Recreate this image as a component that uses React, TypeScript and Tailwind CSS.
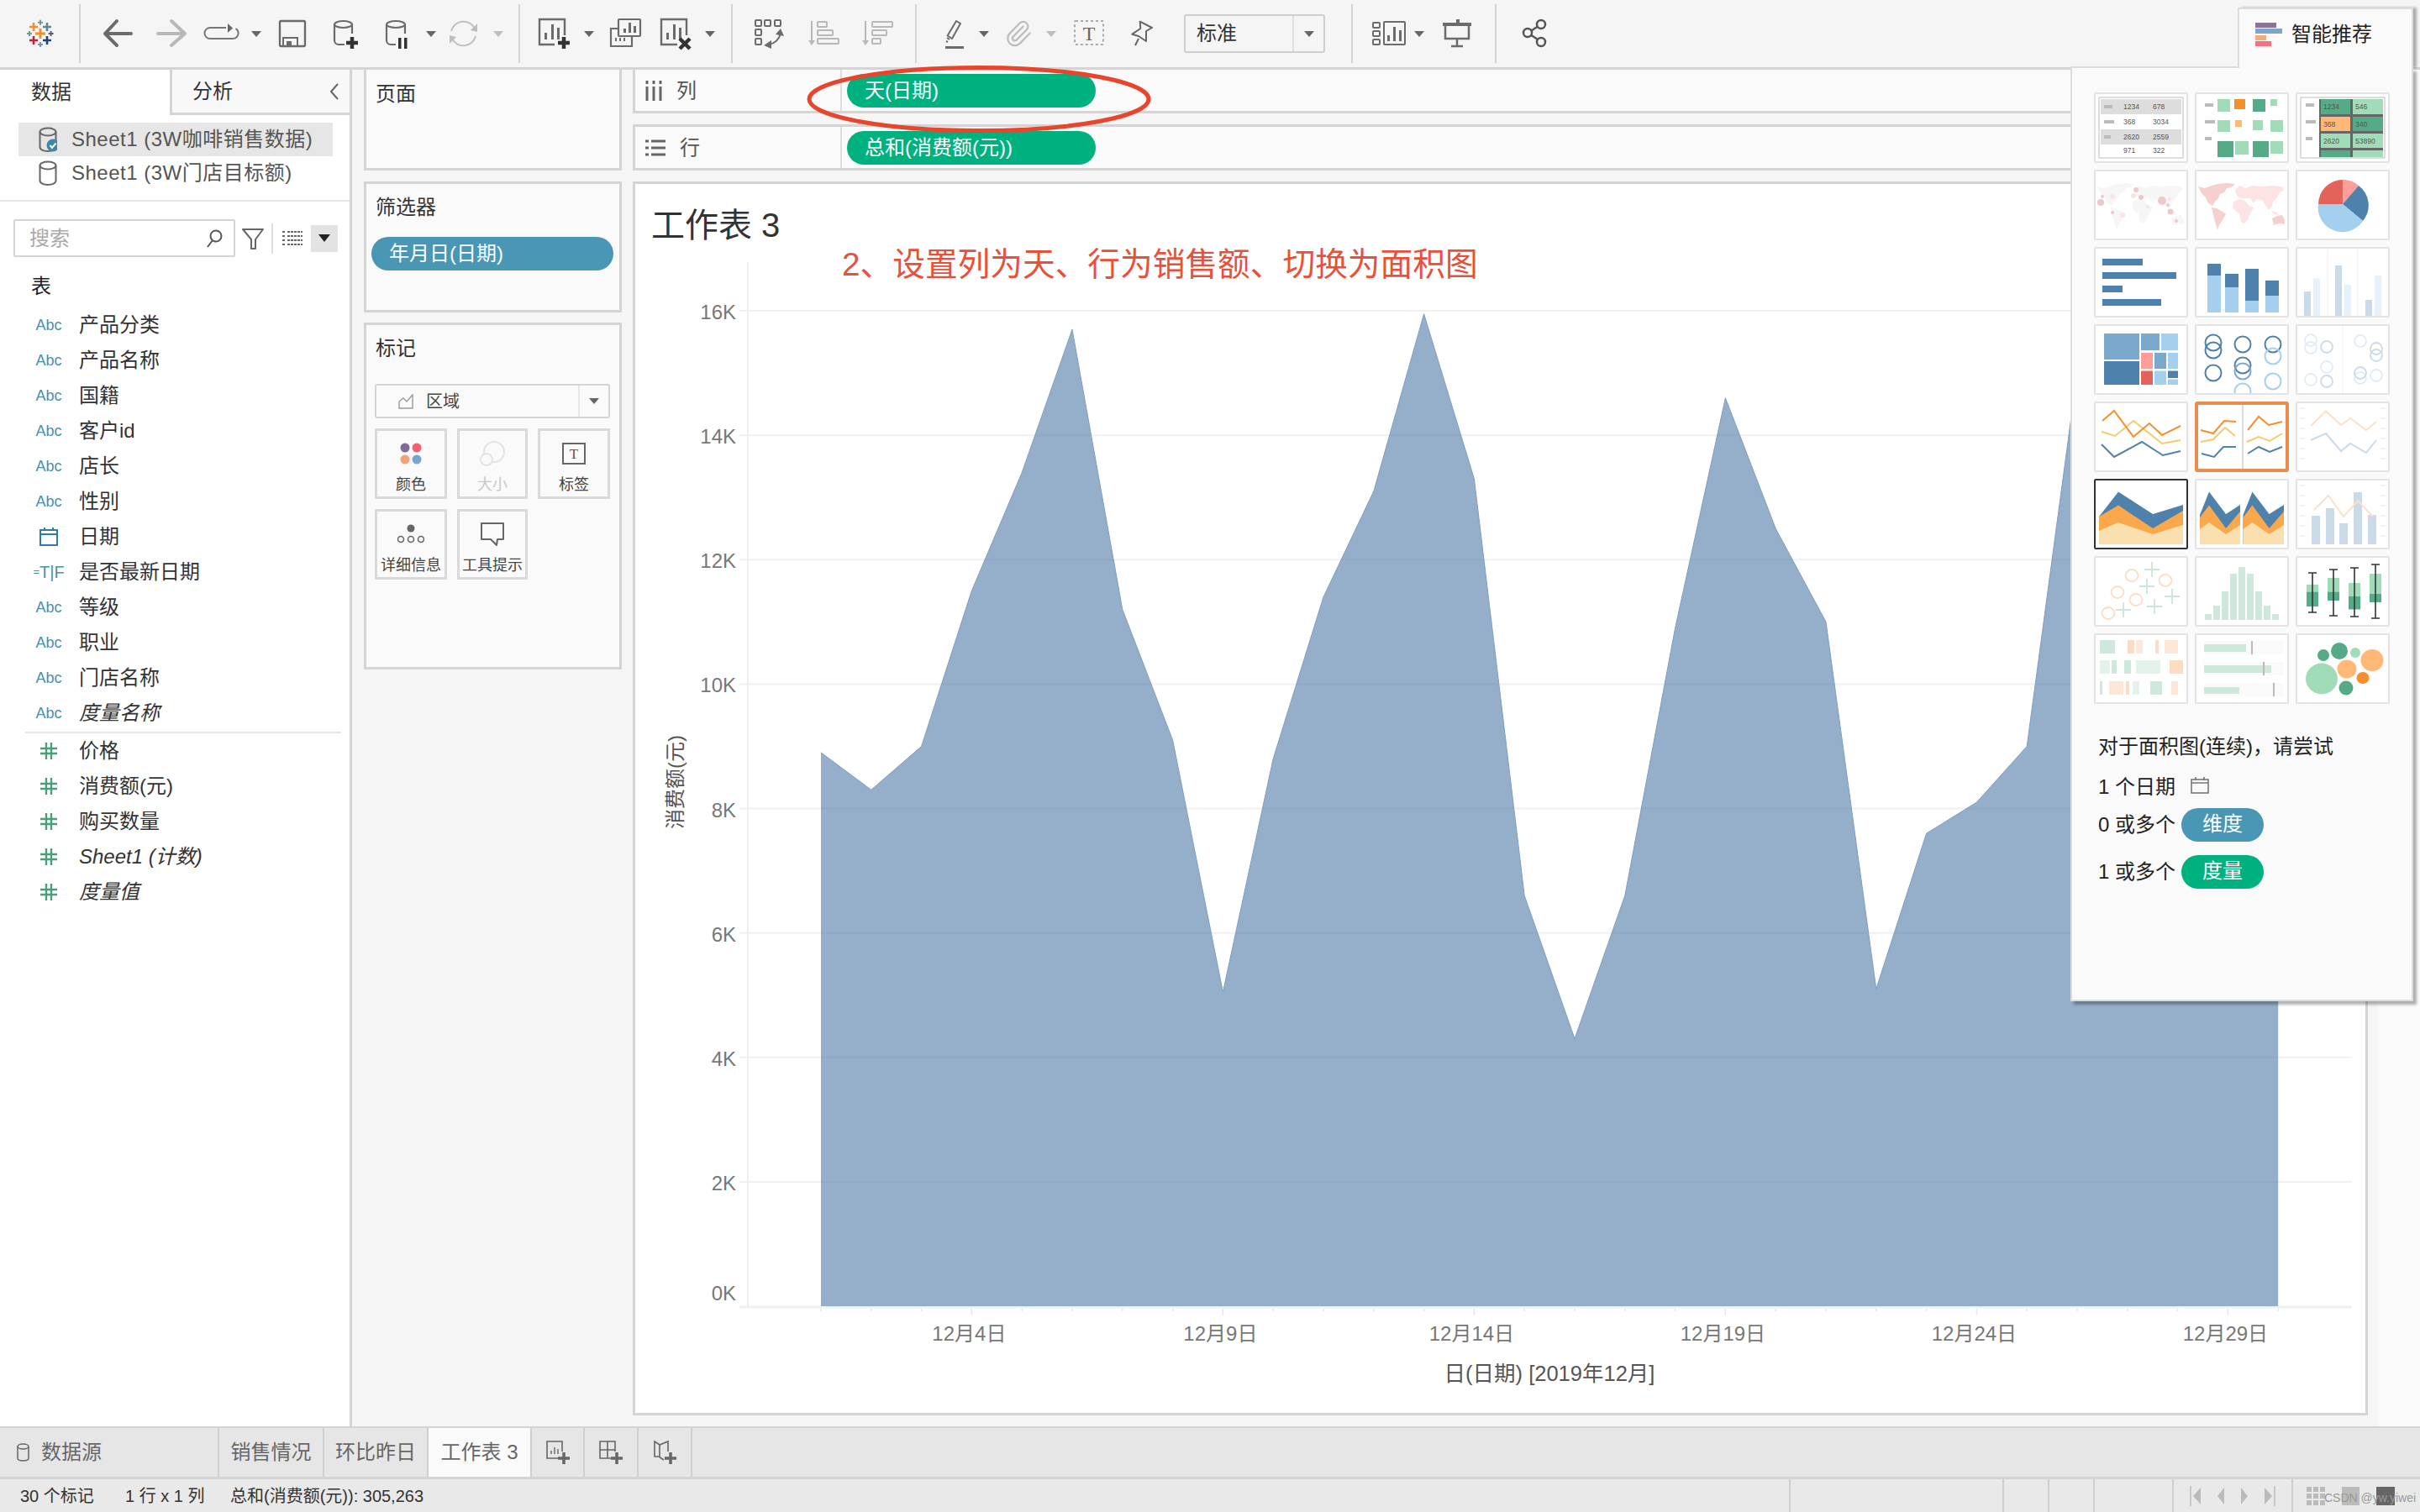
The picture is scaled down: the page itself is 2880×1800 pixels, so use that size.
import React from 'react';
import { Paperclip } from 'lucide-react';

const SALES = [8.9, 8.3, 9.0, 11.5, 13.4, 15.7, 11.2, 9.1, 5.05, 8.8, 11.4, 13.1, 15.95, 13.3, 6.6, 4.3, 6.6, 10.9, 14.6, 12.5, 11.0, 5.1, 7.6, 8.1, 9.0, 15.0, 12.0, 9.0, 7.5, 10.0];
const dayX = (i: number) => 977 + 59.8 * i;
const valY = (k: number) => 1555 - 74.06 * k;

const GRID = '#f0f0f0';
const BLUE = '#4e81ac';
const SKY = '#a5cfee';
const GREEN = '#55ab87';
const MINT = '#a0dcb8';
const ORANGE = '#f58f2c';
const PEACH = '#ffb877';

function Ico({ className = '', children }: { className?: string; children: React.ReactNode }) {
  return (
    <svg viewBox="0 0 44 44" fill="none" className={`w-[44px] h-[44px] shrink-0 ${className}`}>
      {children}
    </svg>
  );
}

function Caret({ className = '', light = false }: { className?: string; light?: boolean }) {
  return (
    <svg viewBox="0 0 12 7" className={`w-[12px] h-[7px] shrink-0 ${className}`}>
      <path d="M0 0H12L6 7Z" fill={light ? '#bdbdbd' : '#666'} />
    </svg>
  );
}

function Sep({ className = '' }: { className?: string }) {
  return <div className={`w-[2px] h-[70px] bg-[#d4d4d4] shrink-0 ${className}`} />;
}

function Plus({ x, y, h, w, c }: { x: number; y: number; h: number; w: number; c: string }) {
  return <path d={`M${x - h} ${y}H${x + h}M${x} ${y - h}V${y + h}`} stroke={c} strokeWidth={w} />;
}

function Toolbar() {
  const dark = '#6b6b6b';
  const lite = '#b8b8b8';
  return (
    <div className="flex items-center h-[80px] bg-[#f5f5f5] pl-[26px] shrink-0">
      <Ico>
        <Plus x={14} y={14} h={5} w={2.6} c="#f28e2b" />
        <Plus x={30} y={14} h={5} w={2.6} c="#5b879b" />
        <Plus x={22} y={8.7} h={3} w={2} c="#7099a6" />
        <Plus x={22} y={22} h={6} w={2.8} c="#f28e2b" />
        <Plus x={9} y={22} h={3} w={2} c="#7099a6" />
        <Plus x={34.6} y={22} h={3} w={2} c="#59598f" />
        <Plus x={14} y={30} h={5} w={2.6} c="#c72037" />
        <Plus x={30} y={30} h={5} w={2.6} c="#1f447a" />
        <Plus x={22} y={35} h={3} w={2} c="#7c95b4" />
      </Ico>
      <Sep className="ml-[24px]" />
      <Ico className="ml-[22px]">
        <path d="M21 7L7 22L21 36M7 22H38" stroke={dark} strokeWidth="4" strokeLinecap="round" strokeLinejoin="round" />
      </Ico>
      <Ico className="ml-[20px]">
        <path d="M22 7L38 22L22 36M38 22H6" stroke={lite} strokeWidth="4" strokeLinecap="round" strokeLinejoin="round" />
      </Ico>
      <Ico className="ml-[15px]">
        <path d="M28 15H9a6.5 6.5 0 0 0 0 13H36a6.5 6.5 0 0 0 3.5-12" stroke="#777" strokeWidth="2" />
        <path d="M30 10L30 21L36 15.5Z" fill="#666" />
      </Ico>
      <Caret className="ml-[14px]" />
      <Ico className="ml-[15px]">
        <rect x="7" y="7" width="30" height="30" rx="1.5" stroke={dark} strokeWidth="2.4" />
        <path d="M11 37V27H28V37" stroke={dark} strokeWidth="2" />
        <rect x="15" y="31" width="6" height="6" fill={dark} />
      </Ico>
      <Ico className="ml-[18px]">
        <ellipse cx="20.5" cy="11" rx="10.5" ry="4" stroke={dark} strokeWidth="2.2" />
        <path d="M10 11V30a5 5 0 0 0 5 5H22M31 11V22" stroke={dark} strokeWidth="2.2" />
        <Plus x={31} y={33} h={7} w={4.5} c="#333" />
      </Ico>
      <Ico className="ml-[17px]">
        <ellipse cx="22" cy="11" rx="11" ry="4" stroke={dark} strokeWidth="2.2" />
        <path d="M11 11V30a5 5 0 0 0 5 5H22M33 11V22" stroke={dark} strokeWidth="2.2" />
        <path d="M25 27H28.5V40H25ZM32 27H35.5V40H32Z" fill="#333" />
      </Ico>
      <Caret className="ml-[14px]" />
      <Ico className="ml-[10px]">
        <path d="M8 19A15 15 0 0 1 36 16M37 25A15 15 0 0 1 9 28" stroke="#c0c0c0" strokeWidth="2" />
        <path d="M39 10V20L31 18ZM6 34V24L14 26Z" fill="#bdbdbd" />
      </Ico>
      <Caret className="ml-[14px]" light />
      <Sep className="ml-[18px]" />
      <Ico className="ml-[17px]">
        <path d="M24 35H6V5H36V24" stroke={dark} strokeWidth="2.4" />
        <path d="M12 21H15V29H12ZM20 11H23V29H20ZM27 15H30V29H27Z" fill={dark} />
        <Plus x={35} y={33} h={7} w={4.5} c="#333" />
      </Ico>
      <Caret className="ml-[15px]" />
      <Ico className="ml-[15px]">
        <rect x="14" y="5" width="26" height="20" rx="1" stroke={dark} strokeWidth="2.2" />
        <path d="M20 16H23V21H20ZM26 9H29V21H26ZM32 13H35V21H32Z" fill={dark} />
        <path d="M14 16H5V37H30V25" stroke={dark} strokeWidth="2.2" />
        <path d="M10 27H12V31H10ZM15 27H17V31H15ZM20 27H22V31H20Z" fill={dark} />
      </Ico>
      <Ico className="ml-[14px]">
        <path d="M26 35H7V5H37V24" stroke={dark} strokeWidth="2.4" />
        <path d="M13 21H16V29H13ZM21 11H24V29H21ZM28 15H31V29H28Z" fill={dark} />
        <path d="M29 28L41 40M41 28L29 40" stroke="#333" strokeWidth="4.5" />
      </Ico>
      <Caret className="ml-[15px]" />
      <Sep className="ml-[19px]" />
      <Ico className="ml-[21px]">
        <g stroke={dark} strokeWidth="2">
          <rect x="6" y="6" width="7" height="7" rx="1" />
          <rect x="17" y="6" width="7" height="7" rx="1" />
          <rect x="29" y="6" width="7" height="7" rx="1" />
          <rect x="6" y="17" width="7" height="7" rx="1" />
          <rect x="6" y="28" width="7" height="7" rx="1" />
          <path d="M22 35Q33 33 36 22" />
        </g>
        <path d="M30 23L36 16L40 25ZM25 30L25 40L16 36Z" fill={dark} />
      </Ico>
      <Ico className="ml-[22px]">
        <path d="M7 7V31" stroke={lite} strokeWidth="2" />
        <path d="M3 30H11L7 36Z" fill={lite} />
        <g stroke={lite} strokeWidth="2">
          <rect x="14" y="8" width="11" height="6" rx="1" />
          <rect x="14" y="18" width="18" height="6" rx="1" />
          <rect x="14" y="28" width="25" height="6" rx="1" />
        </g>
      </Ico>
      <Ico className="ml-[18px]">
        <path d="M9 7V31" stroke={lite} strokeWidth="2" />
        <path d="M5 30H13L9 36Z" fill={lite} />
        <g stroke={lite} strokeWidth="2">
          <rect x="17" y="8" width="24" height="6" rx="1" />
          <rect x="17" y="18" width="17" height="6" rx="1" />
          <rect x="17" y="28" width="10" height="6" rx="1" />
        </g>
      </Ico>
      <Sep className="ml-[24px]" />
      <Ico className="ml-[23px]">
        <path d="M24 7L29 10L19 28L13.6 24.5Z" stroke={dark} strokeWidth="2" strokeLinejoin="round" />
        <path d="M13 27L16 29M12 31L14 32" stroke={dark} strokeWidth="2" />
        <rect x="11" y="37" width="22" height="3" fill={dark} />
      </Ico>
      <Caret className="ml-[7px]" />
      <div className="ml-[13px] w-[44px] h-[44px] flex items-center justify-center shrink-0">
        <Paperclip size={34} color="#bdbdbd" strokeWidth={1.6} />
      </div>
      <Caret className="ml-[11px]" light />
      <Ico className="ml-[17px]">
        <rect x="5" y="7" width="34" height="28" rx="1" stroke="#aaa" strokeWidth="2" strokeDasharray="3 3" />
        <text x="22" y="30" textAnchor="middle" fontSize="24" fontFamily="Liberation Serif" fill="#666">T</text>
      </Ico>
      <Ico className="ml-[19px]">
        <path d="M19.7 7.7L34 15L27 19V31L18 25L10.3 22.7L20.3 16ZM18 28L14 36" stroke="#666" strokeWidth="2" strokeLinejoin="round" />
      </Ico>
      <div className="ml-[28px] w-[168px] h-[46px] border-[2px] border-[#cfcfcf] rounded-[3px] flex items-center shrink-0">
        <span className="flex-1 pl-[13px] text-[24px] text-[#333]">标准</span>
        <div className="w-[37px] h-full border-l-[2px] border-[#e0e0e0] flex items-center justify-center">
          <Caret />
        </div>
      </div>
      <Sep className="ml-[31px]" />
      <Ico className="ml-[21px]">
        <g stroke={dark} strokeWidth="2">
          <rect x="3" y="9" width="8" height="6" rx="1" />
          <rect x="3" y="19" width="8" height="6" rx="1" />
          <rect x="3" y="29" width="8" height="6" rx="1" />
          <rect x="16" y="8" width="25" height="27" rx="1" />
        </g>
        <path d="M20 24H23V31H20ZM27 14H30V31H27ZM34 18H37V31H34Z" fill={dark} />
      </Ico>
      <Caret className="ml-[8px]" />
      <Ico className="ml-[18px]">
        <path d="M4 11H38M22 5V9" stroke={dark} strokeWidth="4" />
        <path d="M7 13V28H35V13M21 28V37M14 37H28" stroke={dark} strokeWidth="2.5" />
      </Ico>
      <Sep className="ml-[22px]" />
      <Ico className="ml-[23px]">
        <g stroke="#555" strokeWidth="2.5">
          <circle cx="30" cy="11" r="5" />
          <circle cx="14" cy="21" r="5" />
          <circle cx="30" cy="32" r="5" />
          <path d="M18.5 18.5L26 13.5M18.5 24L26 29" />
        </g>
      </Ico>
    </div>
  );
}

function Cylinder({ check = false }: { check?: boolean }) {
  return (
    <svg viewBox="0 0 22 30" fill="none" className="w-[22px] h-[30px] shrink-0">
      <ellipse cx="11" cy="6" rx="9.5" ry="4.5" stroke="#666" strokeWidth="2" />
      <path d="M1.5 6V24c0 3 4 5 9.5 5s9.5-2 9.5-5V6" stroke="#666" strokeWidth="2" />
      {check && <circle cx="17" cy="22" r="7.5" fill="#3f86a8" />}
      {check && <path d="M13.5 22L16 25L20.5 19.5" stroke="#fff" strokeWidth="2" />}
    </svg>
  );
}

const FIELDS = [
  { k: 'abc', label: '产品分类' },
  { k: 'abc', label: '产品名称' },
  { k: 'abc', label: '国籍' },
  { k: 'abc', label: '客户id' },
  { k: 'abc', label: '店长' },
  { k: 'abc', label: '性别' },
  { k: 'date', label: '日期' },
  { k: 'bool', label: '是否最新日期' },
  { k: 'abc', label: '等级' },
  { k: 'abc', label: '职业' },
  { k: 'abc', label: '门店名称' },
  { k: 'abc', label: '度量名称', italic: true },
];

const MEASURES = [
  { label: '价格' },
  { label: '消费额(元)' },
  { label: '购买数量' },
  { label: 'Sheet1 (计数)', italic: true },
  { label: '度量值', italic: true },
];

function FieldRow({ k, label, italic }: { k: string; label: string; italic?: boolean }) {
  return (
    <div className="flex items-center h-[42px]">
      <div className="w-[94px] pl-[22px] flex justify-center items-center shrink-0">
        {k === 'abc' && <span className="text-[18px] text-[#4a8fab]">Abc</span>}
        {k === 'bool' && (
          <span className="text-[#4a8fab] flex items-center">
            <span className="text-[13px]">=</span>
            <span className="text-[20px]">T|F</span>
          </span>
        )}
        {k === 'date' && (
          <svg viewBox="0 0 22 22" fill="none" className="w-[22px] h-[22px]">
            <rect x="1" y="3" width="20" height="18" stroke="#2f7ea0" strokeWidth="2" />
            <path d="M1 8H21M6 0V4M16 0V4" stroke="#2f7ea0" strokeWidth="2" />
          </svg>
        )}
        {k === 'num' && (
          <svg viewBox="0 0 20 20" fill="none" className="w-[20px] h-[20px]">
            <path d="M7 0V20M13 0V20M0 7H20M0 13H20" stroke="#4a9f7a" strokeWidth="2.4" />
          </svg>
        )}
      </div>
      <span className={`text-[24px] text-[#333] ${italic ? 'italic' : ''}`}>{label}</span>
    </div>
  );
}

function Sidebar() {
  return (
    <div className="w-[419px] shrink-0 bg-white border-r-[3px] border-[#d4d4d4] flex flex-col">
      <div className="flex h-[54px] text-[24px] text-[#333] shrink-0">
        <div className="w-[202px] pl-[37px] flex items-center">数据</div>
        <div className="flex-1 pl-[24px] pr-[13px] flex items-center justify-between bg-[#f8f8f8] border-l-[3px] border-b-[3px] border-[#d4d4d4]">
          <span>分析</span>
          <svg viewBox="0 0 10 20" fill="none" className="w-[10px] h-[20px]">
            <path d="M9 1L1 10L9 19" stroke="#666" strokeWidth="2" />
          </svg>
        </div>
      </div>
      <div className="pt-[9px] pb-[12px] border-b-[2px] border-[#e6e6e6] text-[24px] text-[#555] shrink-0">
        <div className="ml-[22px] w-[374px] h-[40px] bg-[#e6e6e6] flex items-center pl-[24px] gap-[17px]">
          <Cylinder check />
          <span className="whitespace-nowrap tracking-[0.5px]">Sheet1 (3W咖啡销售数据)</span>
        </div>
        <div className="ml-[22px] h-[40px] flex items-center pl-[24px] gap-[17px]">
          <Cylinder />
          <span className="whitespace-nowrap tracking-[0.5px]">Sheet1 (3W门店目标额)</span>
        </div>
      </div>
      <div className="flex items-center mt-[21px] h-[45px] pl-[16px] shrink-0">
        <div className="w-[264px] h-[45px] border-[2px] border-[#d4d4d4] rounded-[2px] flex items-center justify-between pl-[17px] pr-[13px]">
          <span className="text-[24px] text-[#aaa]">搜索</span>
          <svg viewBox="0 0 20 22" fill="none" className="w-[20px] h-[22px]">
            <circle cx="12" cy="8" r="6.5" stroke="#555" strokeWidth="2" />
            <path d="M8 13L2 21" stroke="#555" strokeWidth="2" />
          </svg>
        </div>
        <svg viewBox="0 0 26 26" fill="none" className="ml-[8px] w-[26px] h-[26px]">
          <path d="M1 2H25L16 14V25H11V14Z" stroke="#666" strokeWidth="2" strokeLinejoin="round" />
        </svg>
        <div className="ml-[9px] w-[2px] h-[36px] bg-[#ddd]" />
        <svg viewBox="0 0 24 18" className="ml-[11px] w-[24px] h-[18px]">
          <path d="M0 1H4M6 1H24M0 6H4M6 6H24M0 11H4M6 11H24M0 16H4M6 16H24" stroke="#666" strokeWidth="2" strokeDasharray="3 1" />
        </svg>
        <div className="ml-[10px] w-[32px] h-[32px] bg-[#e3e3e3] flex items-center justify-center">
          <svg viewBox="0 0 14 9" className="w-[14px] h-[9px]">
            <path d="M0 0H14L7 9Z" fill="#222" />
          </svg>
        </div>
      </div>
      <div className="mt-[15px] h-[40px] flex items-center pl-[37px] text-[24px] text-[#222] shrink-0">表</div>
      <div className="mt-[5px] pb-[1px] shrink-0">
        {FIELDS.map(f => (
          <FieldRow key={f.label} k={f.k} label={f.label} italic={f.italic} />
        ))}
      </div>
      <div className="ml-[30px] mr-[10px] h-[2px] bg-[#e6e6e6] shrink-0" />
      <div className="shrink-0">
        {MEASURES.map(f => (
          <FieldRow key={f.label} k="num" label={f.label} italic={f.italic} />
        ))}
      </div>
    </div>
  );
}

function MarkBtn({ label, faded, children }: { label: string; faded?: boolean; children: React.ReactNode }) {
  return (
    <div className="h-[84px] border-[3px] border-[#d9d9d9] flex flex-col items-center">
      <div className="h-[53px] flex items-center justify-center">{children}</div>
      <span className={`text-[18px] leading-[22px] ${faded ? 'text-[#c8c8c8]' : 'text-[#444]'}`}>{label}</span>
    </div>
  );
}

function CardsColumn() {
  return (
    <div className="w-[307px] shrink-0 flex flex-col">
      <div className="h-[120px] bg-[#fafafa] border-x-[3px] border-b-[3px] border-[#d4d4d4] pl-[11px] pt-[15px] text-[24px] leading-[28px] text-[#333]">
        页面
      </div>
      <div className="mt-[13px] h-[156px] bg-[#fafafa] border-[3px] border-[#d4d4d4] pt-[14px]">
        <div className="pl-[11px] text-[24px] leading-[28px] text-[#333]">筛选器</div>
        <div className="mt-[21px] ml-[6px] w-[288px] h-[40px] rounded-[20px] bg-[#4a96b5] text-white text-[24px] leading-[40px] pl-[21px]">
          年月日(日期)
        </div>
      </div>
      <div className="mt-[12px] h-[413px] bg-[#fafafa] border-[3px] border-[#d4d4d4] pt-[14px] pl-[10px] pr-[11px]">
        <div className="pl-[1px] text-[24px] leading-[28px] text-[#333]">标记</div>
        <div className="mt-[28px] h-[41px] border-[2px] border-[#d4d4d4] rounded-[3px] flex items-center">
          <svg viewBox="0 0 18 18" fill="none" className="ml-[26px] w-[18px] h-[18px]">
            <path d="M1 17V9L6 5L10 9L17 1V17Z" stroke="#999" strokeWidth="1.4" />
          </svg>
          <span className="ml-[15px] text-[20px] text-[#444] flex-1">区域</span>
          <div className="w-[36px] h-full border-l-[2px] border-[#e6e6e6] flex items-center justify-center">
            <Caret />
          </div>
        </div>
        <div className="mt-[12px] grid grid-cols-[86px_84px_86px] gap-x-[12px] gap-y-[12px]">
          <MarkBtn label="颜色">
            <svg viewBox="0 0 26 26" className="w-[26px] h-[26px]">
              <circle cx="6" cy="6" r="5.5" fill="#7e6b9a" />
              <circle cx="20" cy="6" r="5.5" fill="#f2606e" />
              <circle cx="6" cy="20" r="5.5" fill="#f2a273" />
              <circle cx="20" cy="20" r="5.5" fill="#7ba3cf" />
            </svg>
          </MarkBtn>
          <MarkBtn label="大小" faded>
            <svg viewBox="0 0 30 30" fill="none" className="w-[30px] h-[30px]">
              <circle cx="17" cy="13" r="12" stroke="#e3e3e3" strokeWidth="2" />
              <circle cx="8" cy="22" r="7" stroke="#e3e3e3" strokeWidth="2" fill="#fafafa" />
            </svg>
          </MarkBtn>
          <MarkBtn label="标签">
            <svg viewBox="0 0 28 26" fill="none" className="w-[28px] h-[26px]">
              <rect x="1" y="1" width="26" height="24" stroke="#666" strokeWidth="2" />
              <text x="14" y="19" textAnchor="middle" fontSize="17" fontFamily="Liberation Serif" fill="#555">T</text>
            </svg>
          </MarkBtn>
          <MarkBtn label="详细信息">
            <svg viewBox="0 0 32 24" fill="none" className="w-[32px] h-[24px]">
              <circle cx="16" cy="5" r="4.5" fill="#666" />
              <circle cx="4" cy="18" r="3.5" stroke="#666" strokeWidth="1.6" />
              <circle cx="16" cy="18" r="3.5" stroke="#666" strokeWidth="1.6" />
              <circle cx="28" cy="18" r="3.5" stroke="#666" strokeWidth="1.6" />
            </svg>
          </MarkBtn>
          <MarkBtn label="工具提示">
            <svg viewBox="0 0 30 28" fill="none" className="w-[30px] h-[28px]">
              <path d="M2 1H28V20H21L20 27L13 20H2Z" stroke="#666" strokeWidth="2" strokeLinejoin="round" />
            </svg>
          </MarkBtn>
        </div>
      </div>
    </div>
  );
}

function Shelf({ label, top, children, icon }: { label: string; top?: boolean; children: React.ReactNode; icon: React.ReactNode }) {
  return (
    <div className={`bg-[#fafafa] flex border-x-[3px] border-b-[3px] border-[#d4d4d4] ${top ? 'h-[52px]' : 'h-[55px] border-t-[3px]'}`}>
      <div className="w-[246px] shrink-0 pl-[12px] flex items-center border-r-[2px] border-[#ddd] text-[24px] text-[#555]">
        {icon}
        <span className="ml-[17px]">{label}</span>
      </div>
      <div className="pl-[6px] flex items-center">{children}</div>
    </div>
  );
}

function Pill({ children }: { children: React.ReactNode }) {
  return (
    <div className="w-[296px] h-[40px] rounded-[20px] bg-[#00b180] text-white text-[24px] leading-[40px] pl-[21px]">
      {children}
    </div>
  );
}

function Chart() {
  const pts = SALES.map((v, i) => `${dayX(i)},${valY(v)}`).join(' ');
  const area = `${dayX(0)},1555 ${pts} ${dayX(29)},1555`;
  return (
    <svg viewBox="756 312 2059 1370" className="w-[2059px] h-[1370px] block">
      <path d="M890 312V1556" stroke={GRID} strokeWidth="2" />
      {[2, 4, 6, 8, 10, 12, 14, 16].map(k => (
        <path key={k} d={`M880 ${valY(k)}H2799`} stroke={GRID} strokeWidth="2" />
      ))}
      <path d="M880 1556H2799" stroke={GRID} strokeWidth="3" />
      <polygon points={area} fill="#4e79a7" fillOpacity="0.6" />
      <polyline points={pts} fill="none" stroke="#7f9dc0" strokeWidth="1" />
      {SALES.map((_, i) => (
        <path key={i} d={`M${dayX(i)} 1558V${(i + 2) % 5 === 0 ? 1566 : 1561}`} stroke="#e6e6e6" strokeWidth="1.5" />
      ))}
      <g fontSize="24" fill="#777">
        {[2, 4, 6, 8, 10, 12, 14, 16].map(k => (
          <text key={k} x="876" y={valY(k) + 10} textAnchor="end">{k}K</text>
        ))}
        <text x="876" y="1548" textAnchor="end">0K</text>
        {[4, 9, 14, 19, 24, 29].map(d => (
          <text key={d} x={dayX(d - 1) - 3} y="1596" textAnchor="middle">12月{d}日</text>
        ))}
      </g>
      <text x="1844" y="1644" textAnchor="middle" fontSize="25.5" fill="#555">日(日期) [2019年12月]</text>
      <text transform="translate(812 931) rotate(-90)" textAnchor="middle" fontSize="24" fill="#555">消费额(元)</text>
    </svg>
  );
}

function Thumb({ border = '#e3e3e3', bw = 2, children }: { border?: string; bw?: number; children?: React.ReactNode }) {
  return (
    <svg viewBox="0 0 112 84" fill="none" className="w-[112px] h-[84px] block">
      <rect width="112" height="84" fill="#fff" />
      {children}
      <rect x={bw / 2} y={bw / 2} width={112 - bw} height={84 - bw} stroke={border} strokeWidth={bw} rx="1" />
    </svg>
  );
}

function Boxes({ c, b }: { c: string; b: number[][] }) {
  return (
    <g fill={c}>
      {b.map((r, i) => (
        <rect key={i} x={r[0]} y={r[1]} width={r[2] - r[0]} height={r[3] - r[1]} />
      ))}
    </g>
  );
}

function Line({ c, p, w = 2 }: { c: string; p: string; w?: number }) {
  return <polyline points={p} stroke={c} strokeWidth={w} fill="none" />;
}

function WorldMap({ a, b }: { a: string; b: string }) {
  return (
    <g>
      <polygon points="4,20 12,22 20,19 27,17 38,16 48,17 44,21 38,22 35,27 30,29 28,34 24,38 21,43 16,40 13,33 8,28" fill={a} />
      <polygon points="20,45 26,46 33,50 37,53 33,60 29,66 27,72 24,62 22,54" fill={a} />
      <polygon points="46,38 53,35 60,37 64,43 70,45 66,52 63,60 58,64 55,62 53,52 49,50 45,45" fill={b} />
      <polygon points="48,24 53,19 60,22 68,19 80,20 92,19 104,20 106,24 100,28 98,33 93,38 92,44 88,48 84,42 80,36 74,35 70,40 66,34 60,34 54,34 50,31" fill={b} />
      <polygon points="91,49 97,50 100,54 94,53" fill={b} />
      <polygon points="92,58 98,55 104,54 107,60 107,65 100,64 94,66" fill={a} />
    </g>
  );
}

function Ticks() {
  const ys = [8, 20, 32, 44, 56, 68];
  return (
    <g stroke="#eeeeee" strokeWidth="1.5">
      {ys.map(y => (
        <path key={y} d={`M5 ${y}H11M101 ${y}H107`} />
      ))}
    </g>
  );
}

function ChartThumbs() {
  const cellText = { fontSize: 8.5, fill: '#555' };
  return (
    <div className="grid grid-cols-[112px_112px_112px] auto-rows-[84px] gap-[8px] ml-[26px] pt-[29px]">
      <Thumb>
        <rect x="6" y="6" width="100" height="72" stroke="#bbb" />
        <Boxes c="#dddddd" b={[[8, 8, 104, 26], [8, 44, 104, 62]]} />
        <Boxes c="#bbb" b={[[12, 15, 22, 19], [12, 33, 24, 37], [12, 51, 20, 55]]} />
        <g {...cellText}>
          <text x="35" y="20">1234</text><text x="70" y="20">678</text>
          <text x="35" y="38">368</text><text x="70" y="38">3034</text>
          <text x="35" y="56">2620</text><text x="70" y="56">2559</text>
          <text x="35" y="72">971</text><text x="70" y="72">322</text>
        </g>
      </Thumb>
      <Thumb>
        <Boxes c="#bbb" b={[[12, 13, 22, 17], [12, 33, 24, 37], [12, 53, 20, 57]]} />
        <Boxes c={MINT} b={[[27, 8, 42, 23], [90, 8, 98, 16], [27, 33, 42, 47], [69, 33, 81, 45], [90, 33, 105, 47], [48, 58, 64, 74], [90, 58, 105, 73]]} />
        <Boxes c={GREEN} b={[[69, 8, 84, 23], [27, 58, 46, 77], [69, 58, 88, 77]]} />
        <Boxes c={ORANGE} b={[[47, 8, 60, 20]]} />
        <Boxes c={PEACH} b={[[48, 33, 56, 41]]} />
      </Thumb>
      <Thumb>
        <rect x="6" y="6" width="100" height="72" stroke="#bbb" />
        <Boxes c="#bbb" b={[[12, 13, 22, 17], [12, 33, 24, 37], [12, 53, 20, 57]]} />
        <Boxes c="#666" b={[[28, 8, 104, 77]]} />
        <Boxes c={GREEN} b={[[30, 8, 65, 26], [68, 29, 104, 46], [30, 69, 65, 77]]} />
        <Boxes c={MINT} b={[[68, 8, 104, 26], [30, 49, 65, 66], [68, 49, 104, 66], [68, 69, 104, 77]]} />
        <Boxes c={PEACH} b={[[30, 29, 65, 46]]} />
        <g {...cellText}>
          <text x="33" y="20">1234</text><text x="71" y="20">546</text>
          <text x="33" y="41">368</text><text x="71" y="41">340</text>
          <text x="33" y="61">2620</text><text x="71" y="61">53890</text>
        </g>
      </Thumb>

      <Thumb>
        <WorldMap a="#f6f6f6" b="#f6f6f6" />
        <g fill="#eec9cc">
          <circle cx="8" cy="39" r="4" /><circle cx="10" cy="32" r="2" /><circle cx="22" cy="32" r="3" fill="#fbe3e3" />
          <circle cx="50" cy="24" r="3" /><circle cx="47" cy="31" r="3" fill="#fbe3e3" /><circle cx="56" cy="33" r="3" />
          <circle cx="81" cy="37" r="5" /><circle cx="88" cy="42" r="2" /><circle cx="90" cy="35" r="2" fill="#fbe3e3" />
          <circle cx="64" cy="44" r="2" fill="#fbe3e3" /><circle cx="91" cy="50" r="3.5" /><circle cx="22" cy="51" r="2" />
          <circle cx="34" cy="54" r="3" fill="#fbe3e3" /><circle cx="98" cy="61" r="2" />
        </g>
      </Thumb>
      <Thumb><WorldMap a="#f6cfcf" b="#fde3e3" /></Thumb>
      <Thumb>
        <path d="M56 41L27 41A29 29 0 0 1 56 12Z" fill="#e3635a" />
        <path d="M56 41L56 12A29 29 0 0 1 75 19Z" fill="#ff9d98" />
        <path d="M56 41L75 19A29 29 0 0 1 80 61Z" fill={BLUE} />
        <path d="M56 41L80 61A29 29 0 0 1 27 41Z" fill={SKY} />
      </Thumb>

      <Thumb>
        <Boxes c={BLUE} b={[[10, 14, 58, 22], [10, 30, 98, 38], [10, 46, 34, 54], [10, 62, 80, 70]]} />
      </Thumb>
      <Thumb>
        <Boxes c={SKY} b={[[15, 34, 31, 78], [36, 48, 52, 78], [60, 64, 76, 78], [84, 58, 100, 78]]} />
        <Boxes c={BLUE} b={[[15, 20, 31, 34], [36, 32, 52, 48], [60, 26, 76, 64], [84, 40, 100, 58]]} />
      </Thumb>
      <Thumb>
        <path d="M38 2V82M74 2V82" stroke="#f0f0f0" />
        <Boxes c="#cbdae8" b={[[10, 53, 18, 82], [47, 22, 55, 82], [83, 63, 91, 82]]} />
        <Boxes c="#e6f1fb" b={[[21, 37, 29, 82], [58, 45, 66, 82], [94, 34, 102, 82]]} />
      </Thumb>

      <Thumb>
        <Boxes c="#7ba8cd" b={[[12, 11, 54, 42], [56, 11, 78, 31], [72, 34, 86, 53]]} />
        <Boxes c={BLUE} b={[[12, 44, 54, 72], [88, 55.5, 100, 64]]} />
        <Boxes c={SKY} b={[[80, 11, 100, 31], [88, 34, 100, 53], [72, 55.5, 86, 72], [88, 65.5, 100, 72]]} />
        <Boxes c="#ff9d98" b={[[56, 34, 70, 53]]} />
        <Boxes c="#e3635a" b={[[56, 55.5, 70, 72]]} />
      </Thumb>
      <Thumb>
        <g stroke={BLUE} strokeWidth="2">
          <circle cx="22" cy="22" r="9.5" /><circle cx="22" cy="31" r="9.5" /><circle cx="22" cy="58" r="9.5" />
          <circle cx="57" cy="24" r="9.5" /><circle cx="57" cy="49" r="9.5" /><circle cx="93" cy="24" r="9.5" />
        </g>
        <g stroke="#7ba8cd" strokeWidth="2"><circle cx="57" cy="56" r="9.5" /></g>
        <g stroke={SKY} strokeWidth="2">
          <circle cx="93" cy="38" r="9.5" /><circle cx="93" cy="68" r="9.5" /><circle cx="57" cy="80" r="9.5" />
        </g>
      </Thumb>
      <Thumb>
        <path d="M56 2V82" stroke="#f0f0f0" />
        <g stroke="#e0ecf8" strokeWidth="1.8">
          <circle cx="18" cy="19" r="7" /><circle cx="18" cy="28" r="7" /><circle cx="37" cy="51" r="7" /><circle cx="18" cy="66" r="7" />
          <circle cx="77" cy="20" r="7" /><circle cx="77" cy="64" r="7" /><circle cx="96" cy="61" r="7" />
        </g>
        <g stroke="#cbdae8" strokeWidth="1.8">
          <circle cx="37" cy="27" r="7" /><circle cx="37" cy="68" r="7" /><circle cx="96" cy="29" r="7" /><circle cx="96" cy="37" r="7" /><circle cx="77" cy="58" r="7" />
        </g>
      </Thumb>

      <Thumb>
        <Line c="#f5cb6b" p="9,36 25,41 47,23 81,50 103,46" />
        <Line c={ORANGE} p="10,23 24,11 47,42 66,26 81,40 103,29" />
        <Line c={BLUE} p="9,51 24,66 57,48 82,64 103,59" />
      </Thumb>
      <Thumb border="#e88c50" bw={4}>
        <path d="M57 3V81" stroke="#cfcfcf" strokeWidth="1.5" />
        <Line c={ORANGE} p="7,34 22,38 35,23 49,24" />
        <Line c="#f5cb6b" p="7,48 22,45 36,31 48,41" />
        <Line c={BLUE} p="8,62 23,66 34,54 49,54" />
        <Line c={ORANGE} p="63,34 76,18 88,28 104,24" />
        <Line c="#f5cb6b" p="62,48 76,42 89,47 104,38" />
        <Line c={BLUE} p="63,62 76,54 89,60 104,54" />
      </Thumb>
      <Thumb>
        <Ticks />
        <Line c="#fde0c8" p="18,29 36,11.5 54,28 65,20 84,34 96,24" />
        <Line c="#cbdae8" p="18,46 36,38 54,59 65,50 84,61 96,46" />
      </Thumb>

      <Thumb border="#333">
        <polygon points="6,45 29,15.6 70,42 106,31 106,78 6,78" fill={BLUE} />
        <polygon points="6,45 29,31.6 70,59 106,38 106,78 6,78" fill="#f9a94b" />
        <polygon points="6,62 29,52 70,66 106,55 106,78 6,78" fill="#f9e0ae" />
      </Thumb>
      <Thumb>
        <polygon points="6,43 17,15.6 37,42 54,31 54,78 6,78" fill={BLUE} />
        <polygon points="6,46 17,31.6 37,59 54,39 54,78 6,78" fill="#f9a94b" />
        <polygon points="6,60 17,52 37,66 54,55 54,78 6,78" fill="#f9e0ae" />
        <polygon points="57.5,43 68.5,15.6 88.5,42 106,31 106,78 57.5,78" fill={BLUE} />
        <polygon points="57.5,46 68.5,31.6 88.5,59 106,39 106,78 57.5,78" fill="#f9a94b" />
        <polygon points="57.5,60 68.5,52 88.5,66 106,55 106,78 57.5,78" fill="#f9e0ae" />
      </Thumb>
      <Thumb>
        <Ticks />
        <Boxes c="#cbdae8" b={[[19, 44, 29, 78], [36, 35, 46, 78], [52, 53, 62, 78], [69, 16, 79, 78], [86, 43, 96, 78]]} />
        <Line c="#fde0c8" p="22,37 39,20 57,45 74,26 92,45" />
      </Thumb>

      <Thumb>
        <g stroke="#fddcc3" strokeWidth="1.8">
          <ellipse cx="45" cy="23" rx="7.5" ry="7" /><ellipse cx="28" cy="43" rx="7.5" ry="7" /><ellipse cx="50" cy="52" rx="7.5" ry="7" />
          <ellipse cx="85" cy="29" rx="7.5" ry="7" /><ellipse cx="17" cy="68" rx="7.5" ry="7" />
        </g>
        <g stroke="#cbe5d9" strokeWidth="1.8">
          <path d="M60 16H78M69 7V25M54 36H72M63 27V45M84 48H102M93 39V57M63 60H81M72 51V69M26 64H44M35 55V73" />
        </g>
      </Thumb>
      <Thumb>
        <Boxes c="#cfe8dc" b={[[12, 69, 20, 76], [22, 59, 30, 76], [32, 42, 40, 76], [42, 21, 50, 76], [52, 13, 60, 76], [62, 21, 70, 76], [72, 42, 80, 76], [82, 59, 90, 76], [92, 69, 100, 76]]} />
      </Thumb>
      <Thumb>
        <Boxes c={MINT} b={[[13, 34, 27, 42.5], [38, 26, 52, 42.5], [63, 32, 77, 48], [88, 21, 102, 45]]} />
        <Boxes c={GREEN} b={[[13, 42.5, 27, 60], [38, 42.5, 52, 53], [63, 48, 77, 63.5], [88, 45, 102, 55]]} />
        <path d="M20 20V67M15 20H25M15 67H25M45 16V71M40 16H50M40 71H50M70 14V72M65 14H75M65 72H75M95 10V74M90 10H100M90 74H100" stroke="#333" strokeWidth="1.6" />
      </Thumb>

      <Thumb>
        <Boxes c="#cfe8dc" b={[[7, 8, 25, 24], [21, 32, 27, 48], [36, 32, 44, 48], [7, 57, 10, 73], [67, 57, 81, 73]]} />
        <Boxes c="#e3f3ea" b={[[7, 32, 19, 48], [50, 32, 79, 48], [46, 57, 54, 73]]} />
        <Boxes c="#fddcc3" b={[[40, 8, 48, 24], [73, 8, 77, 24], [90, 32, 106, 48], [38, 57, 42, 73]]} />
        <Boxes c="#fde8d8" b={[[50, 8, 58, 24], [84, 8, 100, 24], [18, 57, 35, 73], [92, 57, 100, 73]]} />
      </Thumb>
      <Thumb>
        <Boxes c="#fafafa" b={[[11, 9, 106, 25], [11, 34, 106, 50], [11, 59, 106, 75]]} />
        <Boxes c="#cfe8dc" b={[[11, 13, 61, 22], [11, 38, 91, 47], [11, 64, 53, 72]]} />
        <Boxes c="#bbb" b={[[67, 9, 69, 25], [81, 34, 83, 50], [93, 59, 95, 75]]} />
      </Thumb>
      <Thumb>
        <ellipse cx="31" cy="54" rx="19" ry="18.5" fill={MINT} />
        <circle cx="33" cy="26" r="7" fill={GREEN} />
        <ellipse cx="52" cy="21" rx="10" ry="10" fill={GREEN} />
        <circle cx="71" cy="23" r="6" fill={MINT} />
        <ellipse cx="91" cy="32" rx="13.5" ry="13" fill={PEACH} />
        <ellipse cx="61" cy="42.5" rx="11.5" ry="11" fill={PEACH} />
        <ellipse cx="80" cy="53" rx="7.5" ry="7" fill={ORANGE} />
        <circle cx="60" cy="65" r="8.5" fill={GREEN} />
      </Thumb>
    </div>
  );
}

function ShowMePanel() {
  return (
    <div className="absolute left-[2464px] top-[9px] w-[408px] h-[1183px] flex flex-col text-[24px] text-[#222]">
      <div className="flex h-[72px] shrink-0">
        <div className="w-[199px] border-b-[2px] border-[#dcdcdc]" />
        <div className="w-[209px] bg-[#fafafa] border-t-[2px] border-x-[2px] border-[#dcdcdc] shadow-[4px_0_3px_rgba(0,0,0,0.3)] flex items-center pl-[19px] pb-[10px] gap-[11px] relative">
          <div className="flex flex-col gap-[1.5px] w-[32px]">
            <div className="h-[6px] w-[25px] bg-[#8a7299]" />
            <div className="h-[6px] w-[32px] bg-[#80a3cb]" />
            <div className="h-[6px] w-[13px] bg-[#f5a97f]" />
            <div className="h-[6px] w-[19px] bg-[#f5717f]" />
          </div>
          <span>智能推荐</span>
        </div>
      </div>
      <div className="flex-1 bg-[#fafafa] border-x-[2px] border-b-[2px] border-[#dcdcdc] shadow-[4px_4px_3px_rgba(0,0,0,0.3)] relative">
        <ChartThumbs />
        <div className="ml-[31px] mt-[36px]">
          <div className="h-[30px] leading-[30px] whitespace-nowrap">对于面积图(连续)，请尝试</div>
          <div className="mt-[17px] h-[32px] flex items-center whitespace-nowrap">
            <span>1 个日期</span>
            <svg viewBox="0 0 22 20" fill="none" className="ml-[18px] w-[22px] h-[20px] -mt-[5px]">
              <rect x="1" y="3" width="20" height="16" stroke="#777" strokeWidth="1.6" />
              <path d="M1 7H21M6 0V4M16 0V4" stroke="#777" strokeWidth="1.6" />
            </svg>
          </div>
          <div className="mt-[9px] h-[40px] flex items-center whitespace-nowrap">
            <span className="w-[99px]">0 或多个</span>
            <span className="w-[98px] h-[40px] rounded-[20px] bg-[#4a96b5] text-white text-center leading-[38px]">维度</span>
          </div>
          <div className="mt-[16px] h-[40px] flex items-center whitespace-nowrap">
            <span className="w-[99px]">1 或多个</span>
            <span className="w-[98px] h-[40px] rounded-[20px] bg-[#00b180] text-white text-center leading-[38px]">度量</span>
          </div>
        </div>
      </div>
    </div>
  );
}

function BottomTab({ w, active, children }: { w: string; active?: boolean; children: React.ReactNode }) {
  return (
    <div className={`${w} h-full flex items-center justify-center border-r-[2px] border-[#cfcfcf] whitespace-nowrap ${active ? 'bg-[#fafafa]' : ''}`}>
      {children}
    </div>
  );
}

function SheetTabs() {
  const c = '#666';
  return (
    <div className="h-[60px] shrink-0 bg-[#e6e6e6] flex text-[24px] text-[#666] border-t-[2px] border-[#d4d4d4]">
      <div className="w-[261px] h-full flex items-center pl-[20px] gap-[14px] border-r-[2px] border-[#cfcfcf]">
        <svg viewBox="0 0 15 22" fill="none" className="w-[15px] h-[22px]">
          <ellipse cx="7.5" cy="4" rx="6.5" ry="3" stroke={c} strokeWidth="1.5" />
          <path d="M1 4V18c0 2 3 3 6.5 3s6.5-1 6.5-3V4" stroke={c} strokeWidth="1.5" />
        </svg>
        <span>数据源</span>
      </div>
      <BottomTab w="w-[125px]">销售情况</BottomTab>
      <BottomTab w="w-[124px]">环比昨日</BottomTab>
      <BottomTab w="w-[123px]" active>工作表 3</BottomTab>
      <BottomTab w="w-[63px]">
        <svg viewBox="0 0 30 30" fill="none" className="w-[30px] h-[30px]">
          <path d="M16 22H2V2H20V14" stroke={c} strokeWidth="1.6" />
          <path d="M7 13V17M11 9V17M15 11V17" stroke={c} strokeWidth="1.4" />
          <Plus x={22} y={22} h={7} w={3.5} c={c} />
        </svg>
      </BottomTab>
      <BottomTab w="w-[64px]">
        <svg viewBox="0 0 30 30" fill="none" className="w-[30px] h-[30px]">
          <path d="M16 22H2V2H20V14M2 12H20M11 2V22" stroke={c} strokeWidth="1.6" />
          <Plus x={22} y={22} h={7} w={3.5} c={c} />
        </svg>
      </BottomTab>
      <BottomTab w="w-[64px]">
        <svg viewBox="0 0 30 30" fill="none" className="w-[30px] h-[30px]">
          <path d="M14 24L8 20H3V2L9 6L19 2V14M9 6V20" stroke={c} strokeWidth="1.6" />
          <Plus x={22} y={22} h={7} w={3.5} c={c} />
        </svg>
      </BottomTab>
    </div>
  );
}

function StatusBar() {
  return (
    <div className="h-[42px] shrink-0 bg-[#e9e9e9] border-t-[3px] border-[#d4d4d4] flex text-[20px] text-[#333]">
      <div className="w-[2129px] flex items-center whitespace-nowrap">
        <span className="pl-[24px] w-[149px]">30 个标记</span>
        <span className="w-[125px]">1 行 x 1 列</span>
        <span>总和(消费额(元)): 305,263</span>
      </div>
      <div className="w-[254px] border-l-[2px] border-[#cfcfcf]" />
      <div className="w-[54px] border-l-[2px] border-[#cfcfcf]" />
      <div className="w-[54px] border-l-[2px] border-[#cfcfcf]" />
      <div className="w-[94px] border-l-[2px] border-[#cfcfcf]" />
      <div className="w-[142px] border-l-[2px] border-[#cfcfcf] flex items-center justify-center gap-[18px]">
        <svg viewBox="0 0 14 24" className="w-[14px] h-[24px]"><path d="M1 0V24" stroke="#bbb" strokeWidth="1.5" /><path d="M13 2V22L4 12Z" fill="#bbb" /></svg>
        <svg viewBox="0 0 10 24" className="w-[10px] h-[24px]"><path d="M9 2V22L1 12Z" fill="#bbb" /></svg>
        <svg viewBox="0 0 10 24" className="w-[10px] h-[24px]"><path d="M1 2V22L9 12Z" fill="#bbb" /></svg>
        <svg viewBox="0 0 14 24" className="w-[14px] h-[24px]"><path d="M13 0V24" stroke="#bbb" strokeWidth="1.5" /><path d="M1 2V22L10 12Z" fill="#bbb" /></svg>
      </div>
      <div className="flex-1 border-l-[2px] border-[#cfcfcf] flex items-center pl-[16px] gap-[20px]">
        <svg viewBox="0 0 22 22" className="w-[22px] h-[22px]">
          <path d="M0 0H6V6H0ZM8 0H14V6H8ZM16 0H22V6H16ZM0 8H6V14H0ZM8 8H14V14H8ZM16 8H22V14H16ZM0 16H6V22H0ZM8 16H14V22H8ZM16 16H22V22H16Z" fill="#bbb" />
        </svg>
        <div className="w-[21px] h-[22px] bg-[#bbb]" />
        <div className="w-[22px] h-[22px] bg-[#666]" />
      </div>
    </div>
  );
}

export default function App() {
  return (
    <div className="relative w-[2880px] h-[1800px] overflow-hidden flex flex-col bg-[#f5f5f5] font-['Liberation_Sans','Noto_Sans_CJK_SC',sans-serif]">
      <Toolbar />
      <div className="flex-1 min-h-0 flex border-t-[3px] border-[#d4d4d4]">
        <Sidebar />
        <div className="ml-[14px]">
          <CardsColumn />
        </div>
        <div className="ml-[13px] w-[2065px] shrink-0 flex flex-col">
          <Shelf
            label="列"
            top
            icon={
              <svg viewBox="0 0 20 24" className="w-[20px] h-[24px]">
                <path d="M2 7V24M10 7V24M18 7V24M2 0V4M10 0V4M18 0V4" stroke="#666" strokeWidth="3" />
              </svg>
            }
          >
            <Pill>天(日期)</Pill>
          </Shelf>
          <div className="mt-[13px]">
            <Shelf
              label="行"
              icon={
                <svg viewBox="0 0 24 20" className="w-[24px] h-[20px]">
                  <path d="M0 2H4M7 2H24M0 10H4M7 10H24M0 18H4M7 18H24" stroke="#666" strokeWidth="3" />
                </svg>
              }
            >
              <Pill>总和(消费额(元))</Pill>
            </Shelf>
          </div>
          <div className="relative mt-[13px] h-[1469px] bg-white border-[3px] border-[#d4d4d4]">
            <div className="h-[93px] pl-[19px] pt-[27px] text-[40px] leading-[44px] text-[#333]">工作表 3</div>
            <Chart />
            <div className="absolute left-[246px] top-[74px] text-[38.7px] leading-[44px] text-[#e8503a] whitespace-nowrap">
              2、设置列为天、行为销售额、切换为面积图
            </div>
          </div>
        </div>
        <div className="ml-[12px] flex-1 bg-[#fafafa]" />
      </div>
      <SheetTabs />
      <StatusBar />
      <ShowMePanel />
      <svg viewBox="0 0 412 84" fill="none" className="absolute left-[959px] top-[77px] w-[412px] h-[84px]">
        <ellipse cx="206" cy="41" rx="202" ry="37.5" stroke="#e8452c" strokeWidth="5" />
      </svg>
      <div className="absolute left-[2766px] top-[1771px] text-[14px] leading-[24px] text-[#999] whitespace-nowrap">CSDN @yw.yiwei</div>
    </div>
  );
}
